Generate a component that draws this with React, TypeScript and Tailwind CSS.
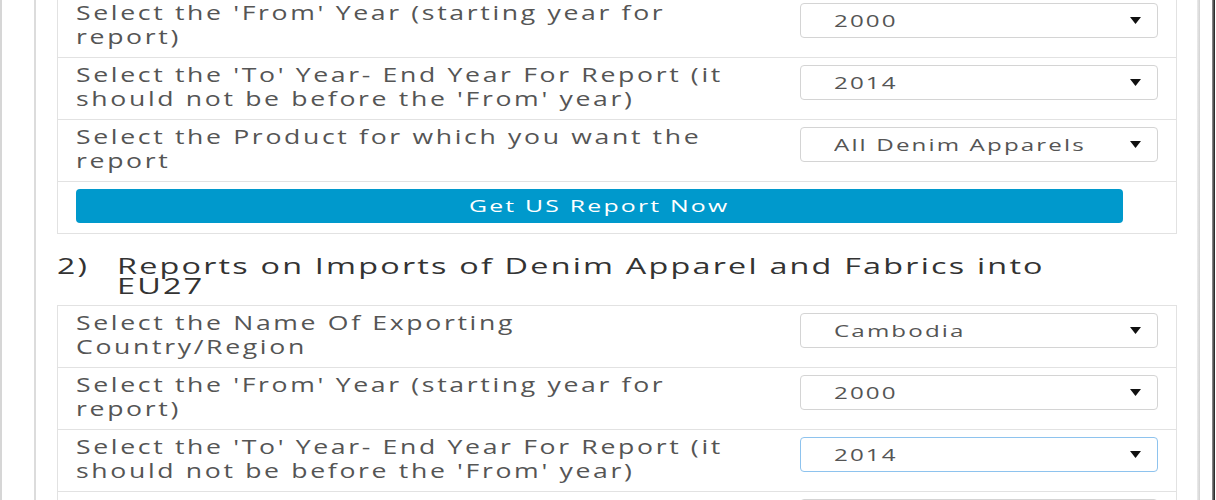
import React from 'react';

type Row = { lines: [string, string]; value: string; focused?: boolean };

const US_ROWS: Row[] = [
  { lines: ["Select the 'From' Year (starting year for", 'report)'], value: '2000' },
  { lines: ["Select the 'To' Year- End Year For Report (it", "should not be before the 'From' year)"], value: '2014' },
  { lines: ['Select the Product for which you want the', 'report'], value: 'All Denim Apparels' },
];

const EU_ROWS: Row[] = [
  { lines: ['Select the Name Of Exporting', 'Country/Region'], value: 'Cambodia' },
  { lines: ["Select the 'From' Year (starting year for", 'report)'], value: '2000' },
  { lines: ["Select the 'To' Year- End Year For Report (it", "should not be before the 'From' year)"], value: '2014', focused: true },
  { lines: ['Select the Product for which you want the', 'report'], value: 'All Denim Apparels' },
];

function FakeSelect({ value, focused }: { value: string; focused?: boolean }) {
  return (
    <div
      className={
        focused
          ? 'mt-[2px] flex h-[35px] w-[358px] items-center justify-between rounded-[4px] border border-[#8ec3ee] bg-white pl-[33px] pr-[16px]'
          : 'mt-[2px] flex h-[35px] w-[358px] items-center justify-between rounded-[4px] border border-[#d4d4d4] bg-white pl-[33px] pr-[16px]'
      }
    >
      <span className="inline-block origin-left scale-x-[1.42] text-[17px] tracking-[1.5px] text-[#555]">{value}</span>
      <svg width="11" height="7" viewBox="0 0 11 7">
        <path d="M0 0 H11 L5.5 7 Z" fill="#111" />
      </svg>
    </div>
  );
}

function FormRow({ row }: { row: Row }) {
  return (
    <div className="flex items-start border-t border-[#e2e2e2] pb-[8px] pt-[5px] first:border-t-0">
      <div className="w-[742px] whitespace-nowrap pl-[18px] text-[20px] leading-[24px] text-[#555]">
        <span className="inline-block origin-left scale-x-[1.33] tracking-[2px]">
          {row.lines[0]}
          <br />
          {row.lines[1]}
        </span>
      </div>
      <FakeSelect value={row.value} focused={row.focused} />
    </div>
  );
}

export default function App() {
  return (
    <div className="flex h-[500px] w-[1216px] overflow-hidden bg-white font-['Open_Sans',sans-serif]">
      {/* page frame lines */}
      <div className="w-[2px] shrink-0 bg-[#d6d6d6]" />
      <div className="w-[32px] shrink-0" />
      <div className="w-[2px] shrink-0 bg-[#dcdcdc]" />

      <div className="w-[1161px] shrink-0 pl-[21px] pr-[20px]">
        {/* US report table */}
        <div className="mt-[-5px] w-[1120px] border border-[#e2e2e2]">
          {US_ROWS.map((r, i) => (
            <FormRow key={i} row={r} />
          ))}
          <div className="border-t border-[#e2e2e2] pb-[10px] pl-[18px] pt-[7px]">
            <button className="flex h-[34px] w-[1047px] items-center justify-center rounded-[4px] bg-[#0099cc] text-[17px] font-medium text-white">
              <span className="inline-block scale-x-[1.46] tracking-[1.5px]">Get US Report Now</span>
            </button>
          </div>
        </div>

        {/* EU heading */}
        <div className="mt-[21px] flex text-[22px] font-medium leading-[20px] text-[#333]">
          <span className="w-[60px] shrink-0">
            <span className="inline-block origin-left scale-x-[1.45] tracking-[1.5px]">2)</span>
          </span>
          <span className="inline-block origin-left scale-x-[1.47] whitespace-nowrap tracking-[1.5px]">
            Reports on Imports of Denim Apparel and Fabrics into
            <br />
            EU27
          </span>
        </div>

        {/* EU report table */}
        <div className="mt-[10px] w-[1120px] border border-[#e2e2e2]">
          {EU_ROWS.map((r, i) => (
            <FormRow key={i} row={r} />
          ))}
        </div>
      </div>

      <div className="w-[3px] shrink-0 bg-linear-to-r from-[#ececec] to-[#d2d2d2]" />
      <div className="w-[12px] shrink-0" />
      <div className="w-[3px] shrink-0 bg-linear-to-r from-[#9a9a9a] to-[#1a1a1a]" />
      <div className="w-[1px] shrink-0 bg-white" />
    </div>
  );
}
